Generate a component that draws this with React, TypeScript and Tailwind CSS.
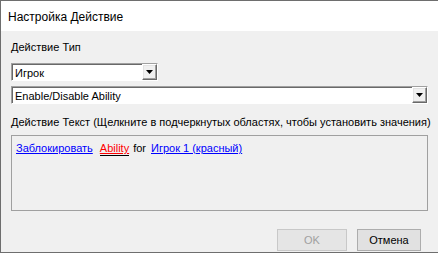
import React from 'react';

function Arrow() {
  return (
    <svg width="7" height="4" viewBox="0 0 7 4" className="block">
      <path d="M0 0h7L3.5 4z" fill="#000" />
    </svg>
  );
}

function DropButton() {
  return (
    <div className="flex h-full w-[15px] items-center justify-center border border-t-white border-l-white border-r-[#696969] border-b-[#696969] bg-[#f0f0f0] shadow-[inset_-1px_-1px_0_#a0a0a0,inset_1px_1px_0_#e3e3e3]">
      <Arrow />
    </div>
  );
}

function Combo({ value, className }: { value: string; className: string }) {
  return (
    <div
      className={`flex h-[18px] items-stretch border border-t-[#a0a0a0] border-l-[#a0a0a0] border-r-white border-b-white bg-white shadow-[inset_1px_1px_0_#696969] ${className}`}
    >
      <div className="flex flex-1 items-center pl-[3px] pt-[1px]">{value}</div>
      <DropButton />
    </div>
  );
}

export default function App() {
  return (
    <div
      className="flex h-[253px] w-[438px] flex-col overflow-hidden border-t border-l border-b border-t-[#6e6e6e] border-l-[#6e6e6e] border-b-[#6e6e6e] bg-[#f0f0f0] text-[11px] leading-[14px] text-black"
      style={{ fontFamily: '"Liberation Sans", Arial, sans-serif' }}
    >
      <div className="flex h-[30px] shrink-0 items-center bg-white pl-[7px] pt-[1px] text-[12px]">
        Настройка Действие
      </div>

      <div className="flex flex-1 flex-col px-[10px] pt-[9px]">
        <div>Действие Тип</div>
        <Combo value="Игрок" className="mt-[9px] w-[147px]" />
        <Combo value="Enable/Disable Ability" className="mt-[5px] w-[417px]" />

        <div className="mt-[11px] whitespace-nowrap">
          Действие Текст (Щелкните в подчеркнутых областях, чтобы установить значения)
        </div>

        <div className="mt-[6px] h-[76px] w-[417px] border border-[#a0a0a0] px-[4px] pt-[5px]">
          <div className="flex items-baseline whitespace-nowrap">
            <span className="text-[#0000ff] underline">Заблокировать</span>
            <span className="ml-[7px] border-b border-black text-[#ff0000] underline">Ability</span>
            <span className="ml-[4px]">for</span>
            <span className="ml-[5px] text-[#0000ff] underline">Игрок 1 (красный)</span>
          </div>
        </div>

        <div className="mt-[18px] flex justify-end gap-[10px] pr-[7px]">
          <div className="flex h-[22px] w-[70px] items-center justify-center border border-[#c8c8c8] bg-[#cccccc]/30 text-[#a0a0a0]">
            OK
          </div>
          <div className="flex h-[22px] w-[64px] items-center justify-center border border-[#adadad] bg-[#e1e1e1]">
            Отмена
          </div>
        </div>
      </div>
    </div>
  );
}
